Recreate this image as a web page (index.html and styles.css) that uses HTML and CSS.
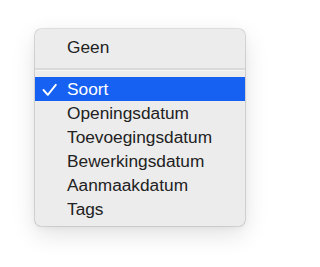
FILE: index.html
```html
<!DOCTYPE html>
<html>
<head>
<meta charset="utf-8">
<link rel="stylesheet" href="styles.css">
</head>
<body>
<div class="menu">
  <div class="item"><span class="gutter"></span><span class="label">Geen</span></div>
  <div class="separator"></div>
  <div class="item selected"><span class="gutter"><svg class="check" width="16" height="14" viewBox="0 0 16 14"><polyline points="1.5,7 5.8,11.8 13.8,1.8" fill="none" stroke="#ffffff" stroke-width="1.9" stroke-linecap="round" stroke-linejoin="round"/></svg></span><span class="label">Soort</span></div>
  <div class="item"><span class="gutter"></span><span class="label">Openingsdatum</span></div>
  <div class="item"><span class="gutter"></span><span class="label">Toevoegingsdatum</span></div>
  <div class="item"><span class="gutter"></span><span class="label">Bewerkingsdatum</span></div>
  <div class="item"><span class="gutter"></span><span class="label">Aanmaakdatum</span></div>
  <div class="item"><span class="gutter"></span><span class="label">Tags</span></div>
</div>
</body>
</html>
```
FILE: styles.css
```css
html, body {
  margin: 0;
  padding: 0;
  background: #ffffff;
}
body {
  width: 279px;
  height: 267px;
  overflow: hidden;
  font-family: "Liberation Sans", Arial, sans-serif;
}
.menu {
  margin: 29px 0 0 35px;
  width: 210px;
  height: 197px;
  box-sizing: border-box;
  padding: 6px 0 5px;
  background: #ececec;
  border-radius: 6px;
  box-shadow: 0 0 0 0.6px rgba(0, 0, 0, 0.2), 0 8px 24px rgba(0, 0, 0, 0.12), 0 2px 6px rgba(0, 0, 0, 0.05);
  overflow: hidden;
}
.item {
  display: flex;
  align-items: center;
  height: 24px;
  line-height: 24px;
  font-size: 17.3px;
  color: #222222;
}
.gutter {
  width: 32px;
  flex: none;
  display: flex;
  align-items: center;
  padding-left: 7px;
  box-sizing: border-box;
}
.selected {
  background: #1660f2;
  color: #ffffff;
}
.check {
  display: block;
  margin-top: 1px;
}
.separator {
  height: 2px;
  margin: 9px 0 7px;
  background: #dadada;
  border-bottom: 1px solid #f5f5f5;
  margin-bottom: 6px;
}
```
